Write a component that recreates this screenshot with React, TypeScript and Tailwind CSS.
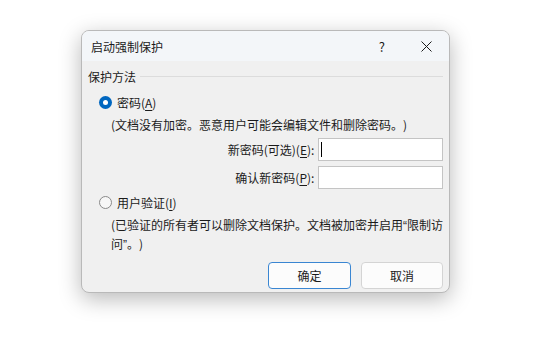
import React from "react";

const font = { fontFamily: '"Noto Sans CJK SC", "Noto Sans", sans-serif' };

function Radio({ checked }: { checked?: boolean }) {
  if (checked) {
    return (
      <span className="flex h-[13px] w-[13px] items-center justify-center rounded-full bg-[#0067c0]">
        <span className="h-[5px] w-[5px] rounded-full bg-white" />
      </span>
    );
  }
  return <span className="h-[13px] w-[13px] rounded-full border border-[#8a8a8a] bg-[#f7f7f7]" />;
}

function Field({ label, k, caret }: { label: string; k: string; caret?: boolean }) {
  return (
    <div className="flex h-[23px] items-center">
      <div className="flex w-[233px] justify-end pr-[4px]">
        {label}(<span className="underline underline-offset-2">{k}</span>):
      </div>
      <div className="relative h-[23px] w-[126px] border border-[#c4c4c4] bg-white">
        {caret && <span className="absolute left-[2px] top-[3px] h-[15px] w-px bg-black" />}
      </div>
    </div>
  );
}

export default function App() {
  return (
    <div
      className="h-[339px] w-[560px] bg-white pl-[81px] pt-[30px] text-[12px] leading-[17px] text-[#1b1b1b] [text-spacing-trim:space-all]"
      style={font}
    >
      <div className="flex h-[263px] w-[369px] flex-col overflow-hidden rounded-[8px] border border-[#b9b9b9] bg-[#f0f0f0] shadow-[0_6px_22px_rgba(0,0,0,0.28)]">
        <div className="flex h-[30px] shrink-0 items-center bg-[#f3f6f9] pl-[9px]">
          <span className="flex-1">启动强制保护</span>
          <span className="mr-[36px] text-[13px]">?</span>
          <svg className="mr-[17px]" width="11" height="11" viewBox="0 0 11 11">
            <path d="M0.5 0.5 L10.5 10.5 M10.5 0.5 L0.5 10.5" stroke="#1b1b1b" strokeWidth="1" />
          </svg>
        </div>

        <div className="flex flex-col pl-[6px] pr-[6px] pt-[7px]">
          <div className="flex items-center">
            <span>保护方法</span>
            <span className="ml-[4px] h-px flex-1 bg-[#dcdcdc]" />
          </div>

          <div className="ml-[11px] mt-[9px] flex items-center gap-[5px]">
            <Radio checked />
            <span>
              密码(<span className="underline underline-offset-2">A</span>)
            </span>
          </div>
          <div className="ml-[23px] mt-[5px] whitespace-nowrap">(文档没有加密。恶意用户可能会编辑文件和删除密码。)</div>

          <div className="mt-[5px] flex flex-col gap-[5px]">
            <Field label="新密码(可选)" k="E" caret />
            <Field label="确认新密码" k="P" />
          </div>

          <div className="ml-[11px] mt-[5px] flex items-center gap-[5px]">
            <Radio />
            <span>
              用户验证(<span className="underline underline-offset-2">I</span>)
            </span>
          </div>
          <div className="ml-[23px] mt-[5px] whitespace-nowrap">
            (已验证的所有者可以删除文档保护。文档被加密并启用<span style={{ fontFamily: '"Liberation Sans", sans-serif' }}>“</span>限制访
            <br />
            问<span style={{ fontFamily: '"Liberation Sans", sans-serif' }}>”</span>。)
          </div>

          <div className="mt-[8px] flex justify-end gap-[10px]">
            <button className="h-[27px] w-[83px] rounded-[4px] border border-[#3a86d2] bg-[#fcfcfc]">确定</button>
            <button className="h-[27px] w-[82px] rounded-[4px] border border-[#d4d4d4] bg-[#fcfcfc]">取消</button>
          </div>
        </div>
      </div>
    </div>
  );
}
